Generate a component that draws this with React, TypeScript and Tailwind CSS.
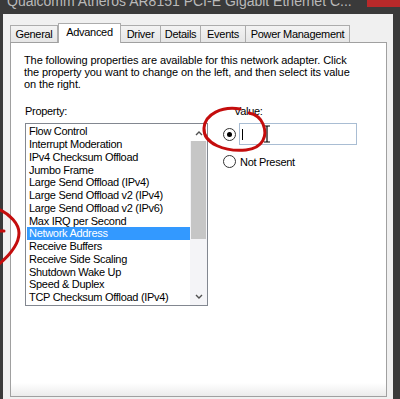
import React from "react";

const items = [
  "Flow Control",
  "Interrupt Moderation",
  "IPv4 Checksum Offload",
  "Jumbo Frame",
  "Large Send Offload (IPv4)",
  "Large Send Offload v2 (IPv4)",
  "Large Send Offload v2 (IPv6)",
  "Max IRQ per Second",
  "Network Address",
  "Receive Buffers",
  "Receive Side Scaling",
  "Shutdown Wake Up",
  "Speed & Duplex",
  "TCP Checksum Offload (IPv4)",
];

const tabs = [
  { label: "General", w: "w-[48px]" },
  { label: "Advanced", w: "w-[63px]", active: true },
  { label: "Driver", w: "w-[41px]" },
  { label: "Details", w: "w-[41px]" },
  { label: "Events", w: "w-[46px]" },
  { label: "Power Management", w: "w-[105px]" },
];

export default function App() {
  return (
    <div className="relative w-[400px] h-[399px] overflow-hidden bg-[#3a3a3a] font-['Liberation_Sans',Arial,sans-serif] text-[11px] tracking-[-0.3px] text-black">
      {/* title bar */}
      <div className="flex h-[14px] overflow-hidden">
        <div className="ml-[7px] mt-[-7px] flex-1 whitespace-nowrap text-[14px] leading-[16px] tracking-[0px] text-[#b9b9b9]">
          Qualcomm Atheros AR8151 PCI-E Gigabit Ethernet C...
        </div>
        <div className="h-[7px] w-[33px] bg-[#b8292a]" />
      </div>

      {/* window body */}
      <div className="ml-[3px] flex h-[385px] w-[390px] flex-col bg-[#f0f0f0] pl-[7px] pr-[6px] pt-[9px]">
        {/* tabs */}
        <div className="flex h-[19px] items-end pl-[1px]">
          {tabs.map((t) =>
            t.active ? (
              <div
                key={t.label}
                className={`relative z-10 mb-[-1px] flex h-[20px] ${t.w} items-start justify-center border border-b-0 border-[#acacac] bg-white pt-[2px] leading-[13px]`}
              >
                {t.label}
              </div>
            ) : (
              <div
                key={t.label}
                className={`flex h-[17px] ${t.w} -ml-px items-start justify-center border border-b-0 border-[#acacac] bg-gradient-to-b from-[#f3f3f3] to-[#e6e6e6] pt-[2px] leading-[13px]`}
              >
                {t.label}
              </div>
            )
          )}
        </div>

        {/* panel */}
        <div className="flex h-[355px] w-[377px] flex-col border border-[#a0a0a0] bg-white">
          <div className="pl-[13px] pt-[11px] leading-[12px] tracking-[-0.1px]">
            <div>The following properties are available for this network adapter. Click</div>
            <div>the property you want to change on the left, and then select its value</div>
            <div>on the right.</div>
          </div>

          <div className="mt-[15px] flex">
            {/* left column */}
            <div className="ml-[14px] flex flex-col">
              <div className="leading-[12px]">Property:</div>
              <div className="mt-[6px] flex h-[183px] w-[183px] border border-[#828790] bg-white">
                <div className="flex w-[164px] flex-col pt-[1px]">
                  {items.map((it) =>
                    it === "Network Address" ? (
                      <div
                        key={it}
                        className="ml-[1px] flex h-[12.75px] items-center whitespace-nowrap bg-[#3399ff] pl-[2px] leading-[12px] text-white"
                      >
                        {it}
                      </div>
                    ) : (
                      <div
                        key={it}
                        className="ml-[1px] flex h-[12.75px] items-center whitespace-nowrap pl-[2px] leading-[12px]"
                      >
                        {it}
                      </div>
                    )
                  )}
                </div>
                {/* scrollbar */}
                <div className="flex w-[17px] flex-col bg-[#f4f4f7]">
                  <div className="flex h-[17px] items-center justify-center bg-white">
                    <svg width="8" height="6" viewBox="0 0 8 6">
                      <path d="M1 5 L4 2 L7 5" stroke="#505050" strokeWidth="1.4" fill="none" />
                    </svg>
                  </div>
                  <div className="mx-[1px] h-[98px] bg-[#c6c6c6]" />
                  <div className="flex-1" />
                  <div className="flex h-[17px] items-center justify-center">
                    <svg width="8" height="6" viewBox="0 0 8 6">
                      <path d="M1 1 L4 4 L7 1" stroke="#505050" strokeWidth="1.4" fill="none" />
                    </svg>
                  </div>
                </div>
              </div>
            </div>

            {/* right column */}
            <div className="ml-[15px] flex flex-col">
              <div className="ml-[11px] leading-[12px]">Value:</div>
              <div className="mt-[6px] flex items-center">
                <div className="flex h-[13px] w-[13px] items-center justify-center rounded-full border border-[#333] bg-white">
                  <div className="h-[5px] w-[5px] rounded-full bg-black" />
                </div>
                <div className="ml-[3px] flex h-[22px] w-[118px] items-center border border-[#a9bdd3] bg-white pl-[2px]">
                  <div className="h-[11px] w-[1px] bg-black" />
                </div>
              </div>
              <div className="mt-[10px] flex items-center">
                <div className="h-[13px] w-[13px] rounded-full border border-[#333] bg-white" />
                <div className="ml-[4px] leading-[12px]">Not Present</div>
              </div>
            </div>
          </div>

          <div className="mt-auto h-[13px] bg-gradient-to-b from-white to-[#ebebeb]" />
        </div>
      </div>

      {/* overlays: mouse cursor + red annotations */}
      <svg className="pointer-events-none absolute left-0 top-0" width="400" height="399" viewBox="0 0 400 399">
        <path d="M264 126 H270 M267 126 V142 M264 142 H270" stroke="#000" strokeWidth="1.2" fill="none" />
        <path
          d="M240 109 C222 106, 205 114, 204 128 C203 144, 226 152, 246 150 C263 148, 268 136, 263 124 C260 117, 254 114, 249 113"
          stroke="#c40d0d"
          strokeWidth="3"
          fill="none"
          strokeLinecap="round"
        />
        <path
          d="M-2 209 C10 214, 19 224, 19 233 C19 244, 10 255, -2 265"
          stroke="#c40d0d"
          strokeWidth="3"
          fill="none"
          strokeLinecap="round"
        />
        <path d="M0 231 H4" stroke="#c40d0d" strokeWidth="3" strokeLinecap="round" />
      </svg>
    </div>
  );
}
